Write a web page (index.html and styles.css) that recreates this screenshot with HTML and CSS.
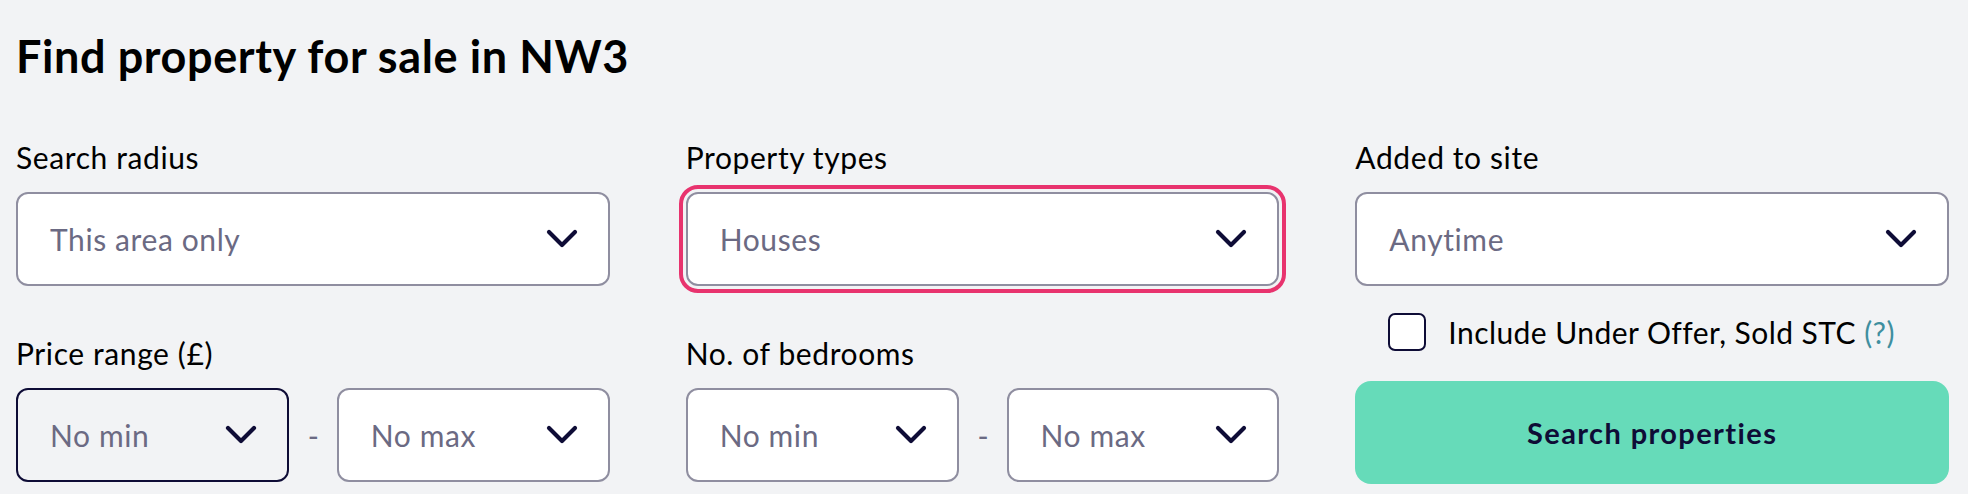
FILE: index.html
```html
<!DOCTYPE html>
<html lang="en">
<head>
<meta charset="utf-8">
<title>Find property for sale in NW3</title>
<link rel="stylesheet" href="styles.css">
</head>
<body>
<main class="page">
  <h1 class="title">Find property for sale in NW3</h1>
  <form class="grid">
    <div class="col">
      <div class="field">
        <label class="label">Search radius</label>
        <div class="select">
          <span class="value">This area only</span>
          <svg class="chev" viewBox="0 0 32 20" width="32" height="20"><polyline points="3,3 16,16 29,3"/></svg>
        </div>
      </div>
      <div class="field field-second">
        <label class="label">Price range (£)</label>
        <div class="range">
          <div class="select select-active">
            <span class="value">No min</span>
            <svg class="chev" viewBox="0 0 32 20" width="32" height="20"><polyline points="3,3 16,16 29,3"/></svg>
          </div>
          <span class="dash">-</span>
          <div class="select">
            <span class="value">No max</span>
            <svg class="chev" viewBox="0 0 32 20" width="32" height="20"><polyline points="3,3 16,16 29,3"/></svg>
          </div>
        </div>
      </div>
    </div>
    <div class="col">
      <div class="field">
        <label class="label">Property types</label>
        <div class="select select-focus">
          <span class="value">Houses</span>
          <svg class="chev" viewBox="0 0 32 20" width="32" height="20"><polyline points="3,3 16,16 29,3"/></svg>
        </div>
      </div>
      <div class="field field-second">
        <label class="label">No. of bedrooms</label>
        <div class="range">
          <div class="select">
            <span class="value">No min</span>
            <svg class="chev" viewBox="0 0 32 20" width="32" height="20"><polyline points="3,3 16,16 29,3"/></svg>
          </div>
          <span class="dash">-</span>
          <div class="select">
            <span class="value">No max</span>
            <svg class="chev" viewBox="0 0 32 20" width="32" height="20"><polyline points="3,3 16,16 29,3"/></svg>
          </div>
        </div>
      </div>
    </div>
    <div class="col">
      <div class="field">
        <label class="label">Added to site</label>
        <div class="select">
          <span class="value">Anytime</span>
          <svg class="chev" viewBox="0 0 32 20" width="32" height="20"><polyline points="3,3 16,16 29,3"/></svg>
        </div>
      </div>
      <div class="check-row">
        <span class="checkbox"></span>
        <span class="check-label">Include Under Offer, Sold STC <span class="help">(?)</span></span>
      </div>
      <button type="button" class="submit">Search properties</button>
    </div>
  </form>
</main>
</body>
</html>
```

FILE: styles.css
```css
html, body {
  margin: 0;
  padding: 0;
}

body {
  background: #f2f3f5;
  font-family: Lato, "Open Sans", sans-serif;
  color: #000;
}

.page {
  padding: 30px 19px 0 16px;
}

.title {
  margin: 0;
  font-size: 45px;
  line-height: 52px;
  font-weight: 700;
  letter-spacing: 0.6px;
  color: #000;
}

.grid {
  display: grid;
  grid-template-columns: 1fr 1fr 1fr;
  column-gap: 76px;
  margin-top: 57px;
}

.col {
  display: flex;
  flex-direction: column;
}

.field {
  display: flex;
  flex-direction: column;
}

.field-second {
  margin-top: 49px;
}

.label {
  font-size: 30px;
  line-height: 36px;
  letter-spacing: 0.6px;
  color: #000;
  margin-bottom: 17px;
}

.select {
  box-sizing: border-box;
  height: 94px;
  border: 2px solid #8f8ea0;
  border-radius: 12px;
  background: #fff;
  display: flex;
  align-items: center;
  justify-content: space-between;
  padding: 0 30px 0 32px;
}

.range .select {
  flex: 1 1 0;
}

.select-active {
  background: transparent;
  border-color: #0e0c36;
}

.select-focus {
  outline: 4px solid #e8336e;
  outline-offset: 3px;
}

.value {
  font-size: 30px;
  letter-spacing: 0.6px;
  color: #6b6a83;
}

.chev {
  display: block;
  flex: none;
}

.chev polyline {
  fill: none;
  stroke: #0e0c36;
  stroke-width: 4.2;
  stroke-linecap: round;
  stroke-linejoin: round;
}

.range {
  display: flex;
  align-items: center;
  gap: 19px;
}

.dash {
  font-size: 30px;
  color: #6b6a83;
  width: 10px;
  text-align: center;
}

.check-row {
  display: flex;
  align-items: center;
  margin-top: 27px;
  padding-left: 33px;
}

.checkbox {
  box-sizing: border-box;
  width: 38px;
  height: 38px;
  border: 2px solid #0e0c36;
  border-radius: 7px;
  background: #fff;
  flex: none;
}

.check-label {
  margin-left: 22px;
  font-size: 30px;
  letter-spacing: 0.45px;
  color: #000;
}

.help {
  color: #3f8f9f;
}

.submit {
  margin-top: 30px;
  height: 103px;
  border: none;
  border-radius: 16px;
  background: #66dbb9;
  color: #0e0c36;
  font-family: Lato, "Open Sans", sans-serif;
  font-weight: 700;
  font-size: 29px;
  letter-spacing: 1.4px;
  cursor: pointer;
}
```
